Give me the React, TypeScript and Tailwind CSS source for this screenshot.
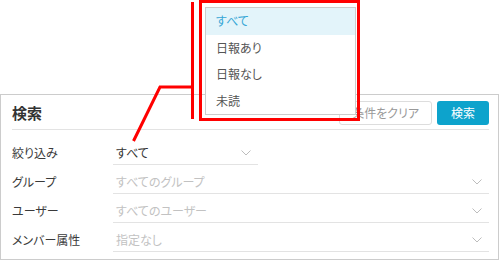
import React from 'react';

const font = "[font-family:'Noto_Sans_CJK_JP','Noto_Sans',sans-serif] [font-feature-settings:'palt']";

const Chevron = () => (
  <svg width="10" height="6" viewBox="0 0 10 6" className="shrink-0">
    <path d="M0.5 0.5 L5 5 L9.5 0.5" fill="none" stroke="#bdbdbd" strokeWidth="1" />
  </svg>
);

interface RowProps {
  label: string;
  value: string;
  placeholder?: boolean;
  short?: boolean;
}

const Row: React.FC<RowProps> = ({ label, value, placeholder, short }) => (
  <div className="flex items-end h-[29px]">
    <div className="w-[101px] text-[12px] leading-[18px] text-[#3a3a3a] pb-[3px]">{label}</div>
    <div
      className={`flex items-center justify-between h-[29px] pt-[6px] border-b border-[#e3e3e3] pl-[3px] pr-[7px] ${
        short ? 'w-[145px]' : 'flex-1'
      }`}
    >
      <span className={`text-[12px] leading-[18px] ${placeholder ? 'text-[#c2c2c2]' : 'text-[#333]'}`}>{value}</span>
      <Chevron />
    </div>
  </div>
);

const App: React.FC = () => {
  const options = ['すべて', '日報あり', '日報なし', '未読'];

  return (
    <div className={`relative w-[500px] h-[261px] bg-white overflow-hidden ${font}`}>
      {/* search panel */}
      <div className="mt-[94px] w-[499px] h-[166px] border border-[#cccccc] pl-[11px] pr-[9px]">
        <div className="flex items-center justify-between h-[34px] pt-[1px]">
          <h2 className="text-[15px] font-semibold text-[#333] leading-none">検索</h2>
          <div className="flex items-center gap-[5px]">
            <button className="h-[24px] px-[12px] whitespace-nowrap text-[12px] text-[#999] border border-[#dddddd] rounded-[3px] bg-white">
              条件をクリア
            </button>
            <button className="h-[24px] w-[52px] text-[12px] text-white bg-[#0da3cc] rounded-[3px]">検索</button>
          </div>
        </div>
        <div className="border-b border-[#e3e3e3]" />
        <div className="pt-[6px]">
          <Row label="絞り込み" value="すべて" short />
          <Row label="グループ" value="すべてのグループ" placeholder />
          <Row label="ユーザー" value="すべてのユーザー" placeholder />
          <Row label="メンバー属性" value="指定なし" placeholder />
        </div>
      </div>

      {/* open dropdown */}
      <div className="absolute left-[205px] top-[7px] w-[151px] h-[108px] border border-[#cccccc] bg-white flex flex-col">
        {options.map((o, i) => (
          <div
            key={o}
            className={`h-[26.5px] flex items-center pl-[10px] text-[12px] ${
              i === 0 ? 'bg-[#e3f4fa] text-[#35a6d6]' : 'text-[#555]'
            }`}
          >
            {o}
          </div>
        ))}
      </div>

      {/* red annotation */}
      <svg className="absolute left-0 top-0 pointer-events-none" width="500" height="261" viewBox="0 0 500 261">
        <rect x="200.5" y="1.5" width="158" height="118" fill="none" stroke="#ff0000" strokeWidth="3" />
        <line x1="192.5" y1="2" x2="192.5" y2="119" stroke="#ff0000" strokeWidth="3" />
        <polyline points="192.5,87 160,87 133.5,141" fill="none" stroke="#ff0000" strokeWidth="3" />
      </svg>
    </div>
  );
};

export default App;
